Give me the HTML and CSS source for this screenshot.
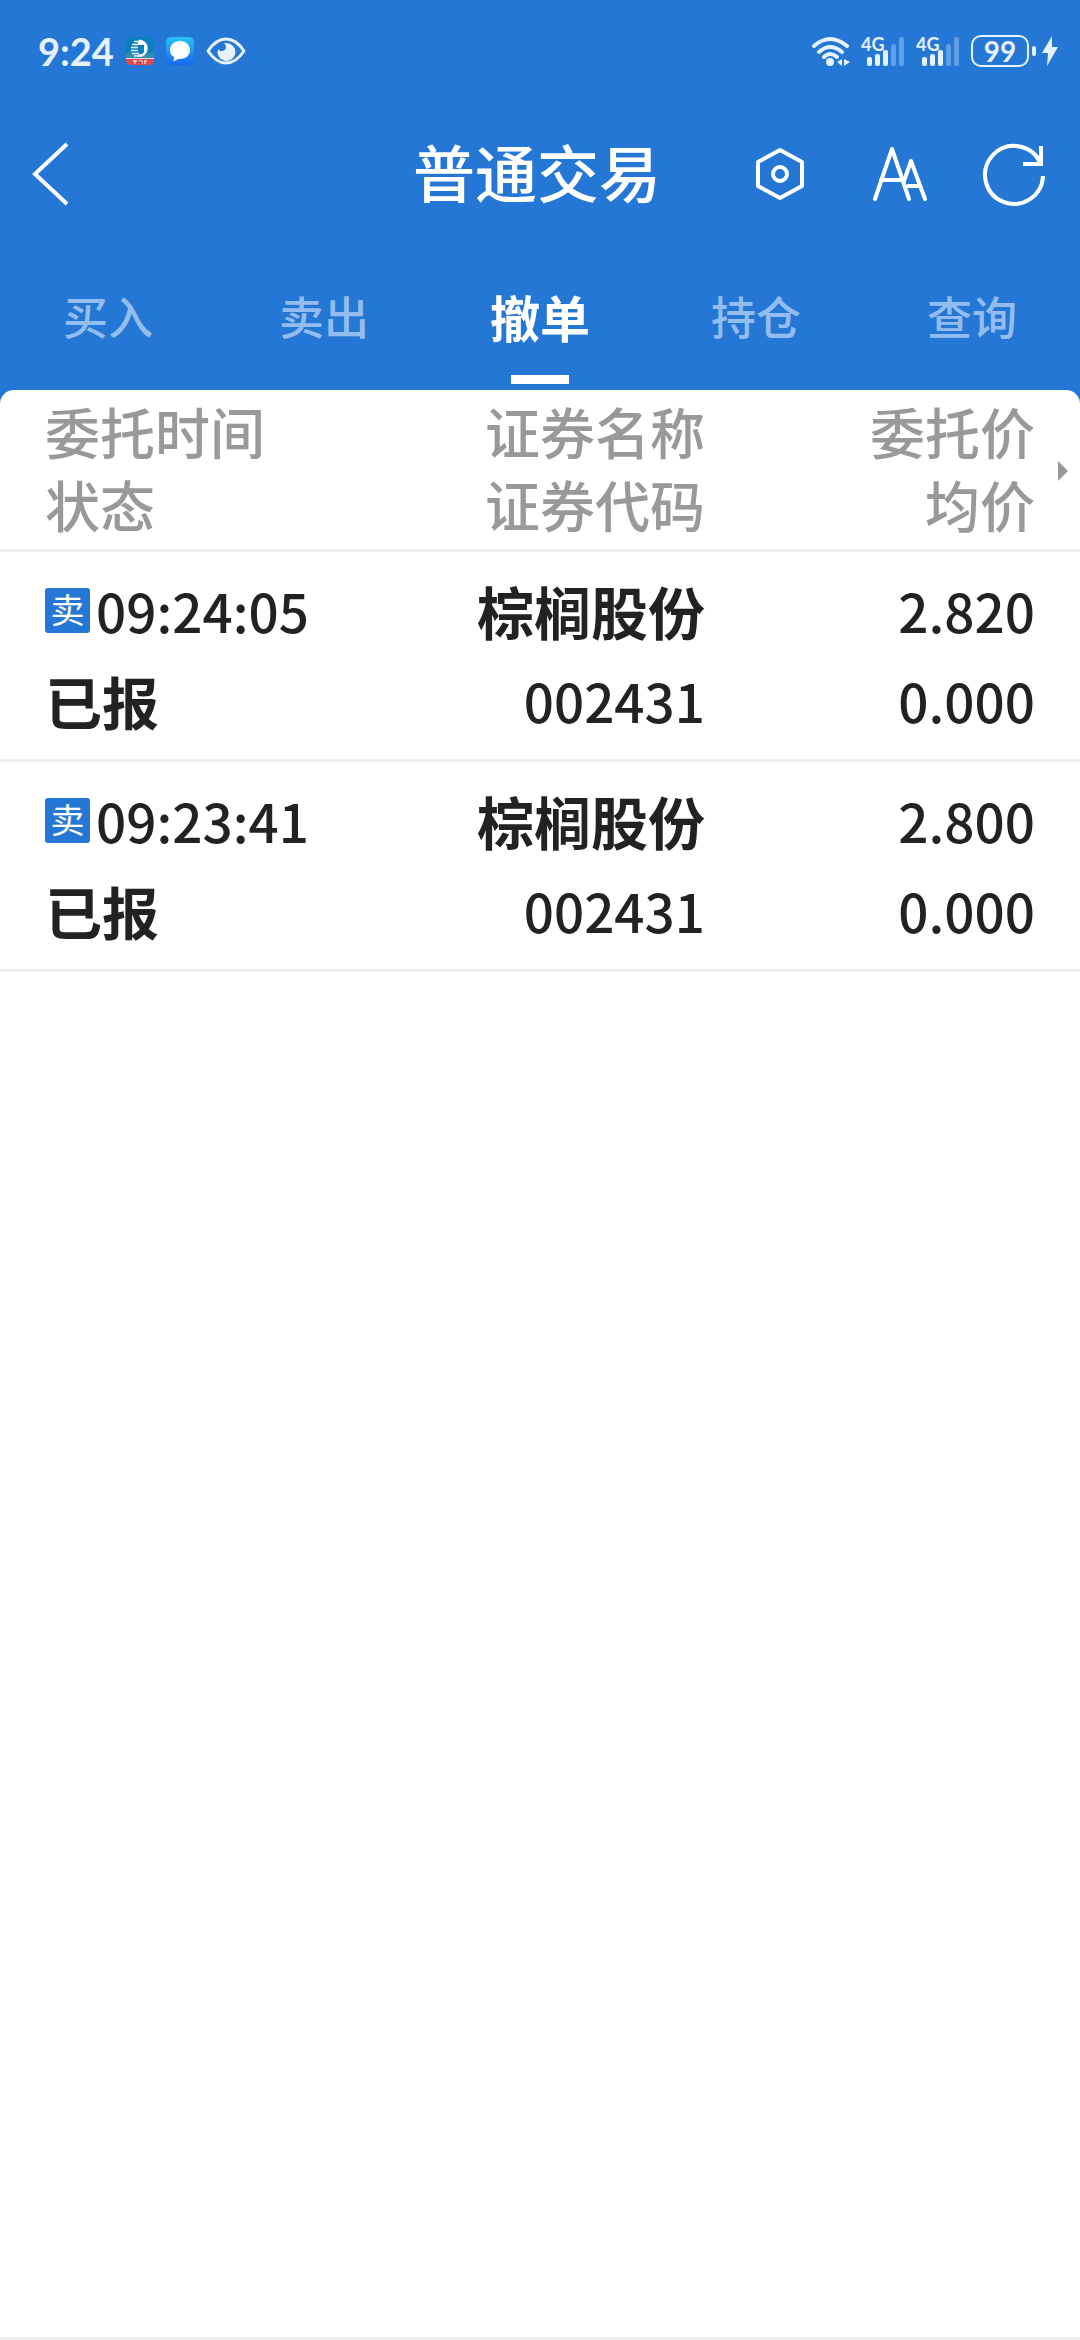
FILE: index.html
```html
<!DOCTYPE html>
<html lang="zh-CN">
<head>
<meta charset="utf-8">
<meta name="viewport" content="width=device-width, initial-scale=1">
<title>普通交易</title>
<link rel="stylesheet" href="styles.css">
</head>
<body>
<div class="page">
  <div class="status">
    <div class="status-left">
      <span class="clock">9:24</span>
      <svg width="28" height="28" viewBox="0 0 28 28" aria-hidden="true">
        <defs>
          <clipPath id="appClip"><rect width="28" height="28" rx="5"/></clipPath>
        </defs>
        <g clip-path="url(#appClip)">
          <rect width="28" height="28" fill="#0a7fc0"/>
          <path d="M0 17q5-4 9 0t9 1 10-3v7H0z" fill="#2f8fae"/>
          <path d="M13 2.500a8.500 8.500 0 1 1 0 17.500l-1-2.500q6 0 6-3V8h-6v-3z" fill="#fff"/>
          <path d="M8 4.500h6M6 7.500h6M5 10.500h7M5 13.500h7M6 16.500h7M8 19h6" stroke="#e6f6ff" stroke-width="1.500"/>
          <rect y="21" width="28" height="2" fill="#e9d9d5"/>
          <rect y="22" width="28" height="6" fill="#e0464b"/>
          <path d="M7 24h4M9 23v4M13 24h3v3M18 24h3M19 24v3" stroke="#fff" stroke-width="1"/>
        </g>
      </svg>
      <svg width="28" height="28" viewBox="0 0 28 28" aria-hidden="true">
        <defs>
          <linearGradient id="chatFill" x1="0" y1="0" x2="0" y2="1">
            <stop offset="0" stop-color="#27c3fa"/>
            <stop offset="1" stop-color="#1668f0"/>
          </linearGradient>
        </defs>
        <rect width="28" height="28" rx="5" fill="url(#chatFill)"/>
        <path d="M14 4c6 0 10 4 10 9s-4 9-10 9h-2q-2 2-5 2 2-2 1-4-4-2-4-7c0-5 4-9 10-9z" fill="#fff"/>
      </svg>
      <svg class="eye" width="40" height="28" viewBox="0 0 40 28" aria-hidden="true">
        <path d="M2 14Q10 2 20 2t18 12Q30 26 20 26T2 14z" fill="none" stroke="#e6f2ff" stroke-width="3" stroke-linejoin="round"/>
        <path d="M20 6a9 9 0 1 1-8 6c1 3 8 3 8-2 0-2-1-3-2-4z" fill="#e6f2ff"/>
      </svg>
    </div>
    <div class="status-right">
      <svg width="40" height="32" viewBox="0 0 40 32" aria-hidden="true">
        <g fill="none" stroke="#e6f2ff" stroke-width="4" stroke-linecap="round">
          <path d="M3 11Q19-3 36 11"/>
          <path d="M8 17Q19 7 31 17"/>
          <path d="M13 22Q19 16 26 22"/>
        </g>
        <circle cx="19" cy="27" r="4" fill="#e6f2ff"/>
        <path d="M31 24v7l-5-4zM33 24v7l6-4z" fill="#e6f2ff"/>
      </svg>
      <svg width="45" height="44" viewBox="0 -6 45 44" role="img">
        <text class="network" x="0" y="16">4G</text>
        <g fill="#e6f2ff">
          <rect x="6" y="22" width="5" height="9" rx="2"/>
          <rect x="14" y="19" width="5" height="12" rx="2"/>
          <rect x="22" y="15" width="5" height="16" rx="2"/>
        </g>
        <g fill="#5f9fe8">
          <rect x="30" y="9" width="5" height="22" rx="2"/>
          <rect x="38" y="2" width="5" height="29" rx="2"/>
        </g>
      </svg>
      <svg width="45" height="44" viewBox="0 -6 45 44" role="img">
        <text class="network" x="0" y="16">4G</text>
        <g fill="#e6f2ff">
          <rect x="6" y="22" width="5" height="9" rx="2"/>
          <rect x="14" y="19" width="5" height="12" rx="2"/>
          <rect x="22" y="15" width="5" height="16" rx="2"/>
        </g>
        <g fill="#5f9fe8">
          <rect x="30" y="9" width="5" height="22" rx="2"/>
          <rect x="38" y="2" width="5" height="29" rx="2"/>
        </g>
      </svg>
      <div class="power">
        <span class="battery">99</span>
        <span class="nub"></span>
        <svg class="bolt" width="16" height="30" viewBox="0 0 16 30" aria-hidden="true">
          <path d="M10 0 0 17h6L5 30 16 11H10z" fill="#e6f2ff"/>
        </svg>
      </div>
    </div>
  </div>

  <header class="topbar">
    <button class="icon-btn" type="button" aria-label="返回">
      <svg width="72" height="72" viewBox="0 0 72 72" fill="none" stroke="#fff" stroke-width="4">
        <path d="M43 6 11 36 43 66"/>
      </svg>
    </button>
    <h1 class="title">普通交易</h1>
    <div class="actions">
      <button class="icon-btn" type="button" aria-label="设置">
        <svg width="72" height="72" viewBox="0 0 72 72" fill="none" stroke="#fff" stroke-width="4" stroke-linejoin="round">
          <path d="M36 12 58 24V48L36 60 14 48V24z"/>
          <circle cx="36" cy="36" r="7"/>
        </svg>
      </button>
      <button class="icon-btn" type="button" aria-label="字号">
        <svg width="72" height="72" viewBox="0 0 72 72" fill="none" stroke="#fff" stroke-width="4" stroke-linejoin="round" stroke-linecap="round">
          <path d="M14 61 31 11 48 61M20 42H42"/>
          <path d="M43 43 50 23 64 61M47 48H59"/>
        </svg>
      </button>
      <button class="icon-btn" type="button" aria-label="刷新">
        <svg width="72" height="72" viewBox="0 0 72 72" fill="none" stroke="#fff" stroke-width="4">
          <path d="M65 38A29 29 0 1 1 62 24"/>
          <path d="M63 8V26H45"/>
        </svg>
      </button>
    </div>
  </header>

  <nav class="tabs">
    <a class="tab" href="#buy">买入</a>
    <a class="tab" href="#sell">卖出</a>
    <a class="tab tab-active" href="#cancel" aria-current="page">撤单</a>
    <a class="tab" href="#hold">持仓</a>
    <a class="tab" href="#query">查询</a>
  </nav>

  <main class="sheet">
    <table class="orders">
      <thead>
        <tr>
          <th>委托时间<br>状态</th>
          <th>证券名称<br>证券代码</th>
          <th>委托价<br>均价</th>
        </tr>
      </thead>
      <tbody>
        <tr>
          <td><span class="line"><span class="badge">卖</span><span class="num">09:24:05</span></span><span class="line word">已报</span></td>
          <td><span class="line word">棕榈股份</span><span class="line num">002431</span></td>
          <td><span class="line num">2.820</span><span class="line num">0.000</span></td>
        </tr>
        <tr>
          <td><span class="line"><span class="badge">卖</span><span class="num">09:23:41</span></span><span class="line word">已报</span></td>
          <td><span class="line word">棕榈股份</span><span class="line num">002431</span></td>
          <td><span class="line num">2.800</span><span class="line num">0.000</span></td>
        </tr>
      </tbody>
    </table>
    <svg class="more" width="10" height="20" viewBox="0 0 10 20" aria-hidden="true">
      <path d="M0 0 10 10 0 20z" fill="#999"/>
    </svg>
  </main>
</div>
</body>
</html>
```
FILE: styles.css
```css
* {
  box-sizing: border-box;
}

body {
  margin: 0;
  font-family: "Noto Sans CJK SC", "Noto Sans", sans-serif;
  font-weight: 500;
  color: #222;
}

.page {
  display: flex;
  flex-direction: column;
  min-height: 100vh;
  background: #2577d5;
}

/* system status bar */
.status {
  display: flex;
  justify-content: space-between;
  align-items: center;
  height: 102px;
  padding: 0 22px 0 38px;
  color: #e6f2ff;
  font-family: Lato, sans-serif;
  font-weight: 700;
}

.status-left,
.status-right,
.power {
  display: flex;
  align-items: center;
}

.status-left {
  gap: 12px;
}

.status-right {
  gap: 10px;
}

.clock {
  font-size: 38px;
  line-height: 40px;
}

.network {
  font-size: 18px;
  fill: #e6f2ff;
}

.power {
  gap: 3px;
}

.battery {
  width: 58px;
  height: 32px;
  border: 2px solid #e6f2ff;
  border-radius: 10px;
  font-size: 28px;
  line-height: 28px;
  text-align: center;
}

.nub {
  width: 4px;
  height: 10px;
  border-radius: 2px;
  background: #e6f2ff;
}

.bolt {
  margin-left: 3px;
}

/* title bar */
.topbar {
  display: grid;
  grid-template-columns: 1fr auto 1fr;
  align-items: center;
  height: 144px;
  padding: 0 30px 0 24px;
}

.icon-btn {
  width: 72px;
  height: 72px;
  padding: 0;
  border: 0;
  background: none;
}

.icon-btn svg {
  display: block;
}

.title {
  margin: 0;
  padding-bottom: 6px;
  font-size: 62px;
  line-height: 72px;
  font-weight: 500;
  color: #fff;
}

.actions {
  display: flex;
  justify-content: flex-end;
  gap: 45px;
}

/* section tabs */
.tabs {
  display: flex;
  height: 144px;
}

.tab {
  position: relative;
  flex: 1;
  font-size: 45px;
  line-height: 140px;
  text-align: center;
  text-decoration: none;
  color: #93bdee;
}

.tab-active {
  font-size: 50px;
  font-weight: 700;
  color: #fff;
}

.tab-active::after {
  content: "";
  position: absolute;
  left: calc(50% - 29px);
  bottom: 6px;
  width: 58px;
  height: 9px;
  background: #fff;
}

/* order list */
.sheet {
  position: relative;
  flex: 1;
  border-bottom: 3px solid #eee;
  border-radius: 14px 14px 0 0;
  background: #fff;
}

.orders,
.orders thead,
.orders tbody {
  display: block;
}

.orders tr {
  display: grid;
  grid-template-columns: repeat(3, 1fr);
  padding: 0 45px;
  border-bottom: 3px solid #eee;
}

.orders th,
.orders td {
  padding: 0;
  text-align: right;
}

.orders th:first-child,
.orders td:first-child {
  text-align: left;
}

.orders th {
  padding: 4px 0 9px;
  font-size: 55px;
  line-height: 73px;
  font-weight: 500;
  color: #999;
}

.orders td {
  padding: 13px 0 14px;
}

.line {
  display: block;
  line-height: 90px;
}

.orders .line:first-child {
  display: flex;
  align-items: center;
  justify-content: flex-end;
}

.orders td:first-child .line:first-child {
  justify-content: flex-start;
  gap: 6px;
}

.word {
  font-size: 57px;
  font-weight: 700;
}

.num {
  font-size: 53px;
}

.badge {
  width: 45px;
  height: 45px;
  border-radius: 3px;
  background: #2577d5;
  color: #fff;
  font-size: 34px;
  line-height: 42px;
  font-weight: 400;
  text-align: center;
}

.more {
  position: absolute;
  top: 71px;
  right: 12px;
}
```
